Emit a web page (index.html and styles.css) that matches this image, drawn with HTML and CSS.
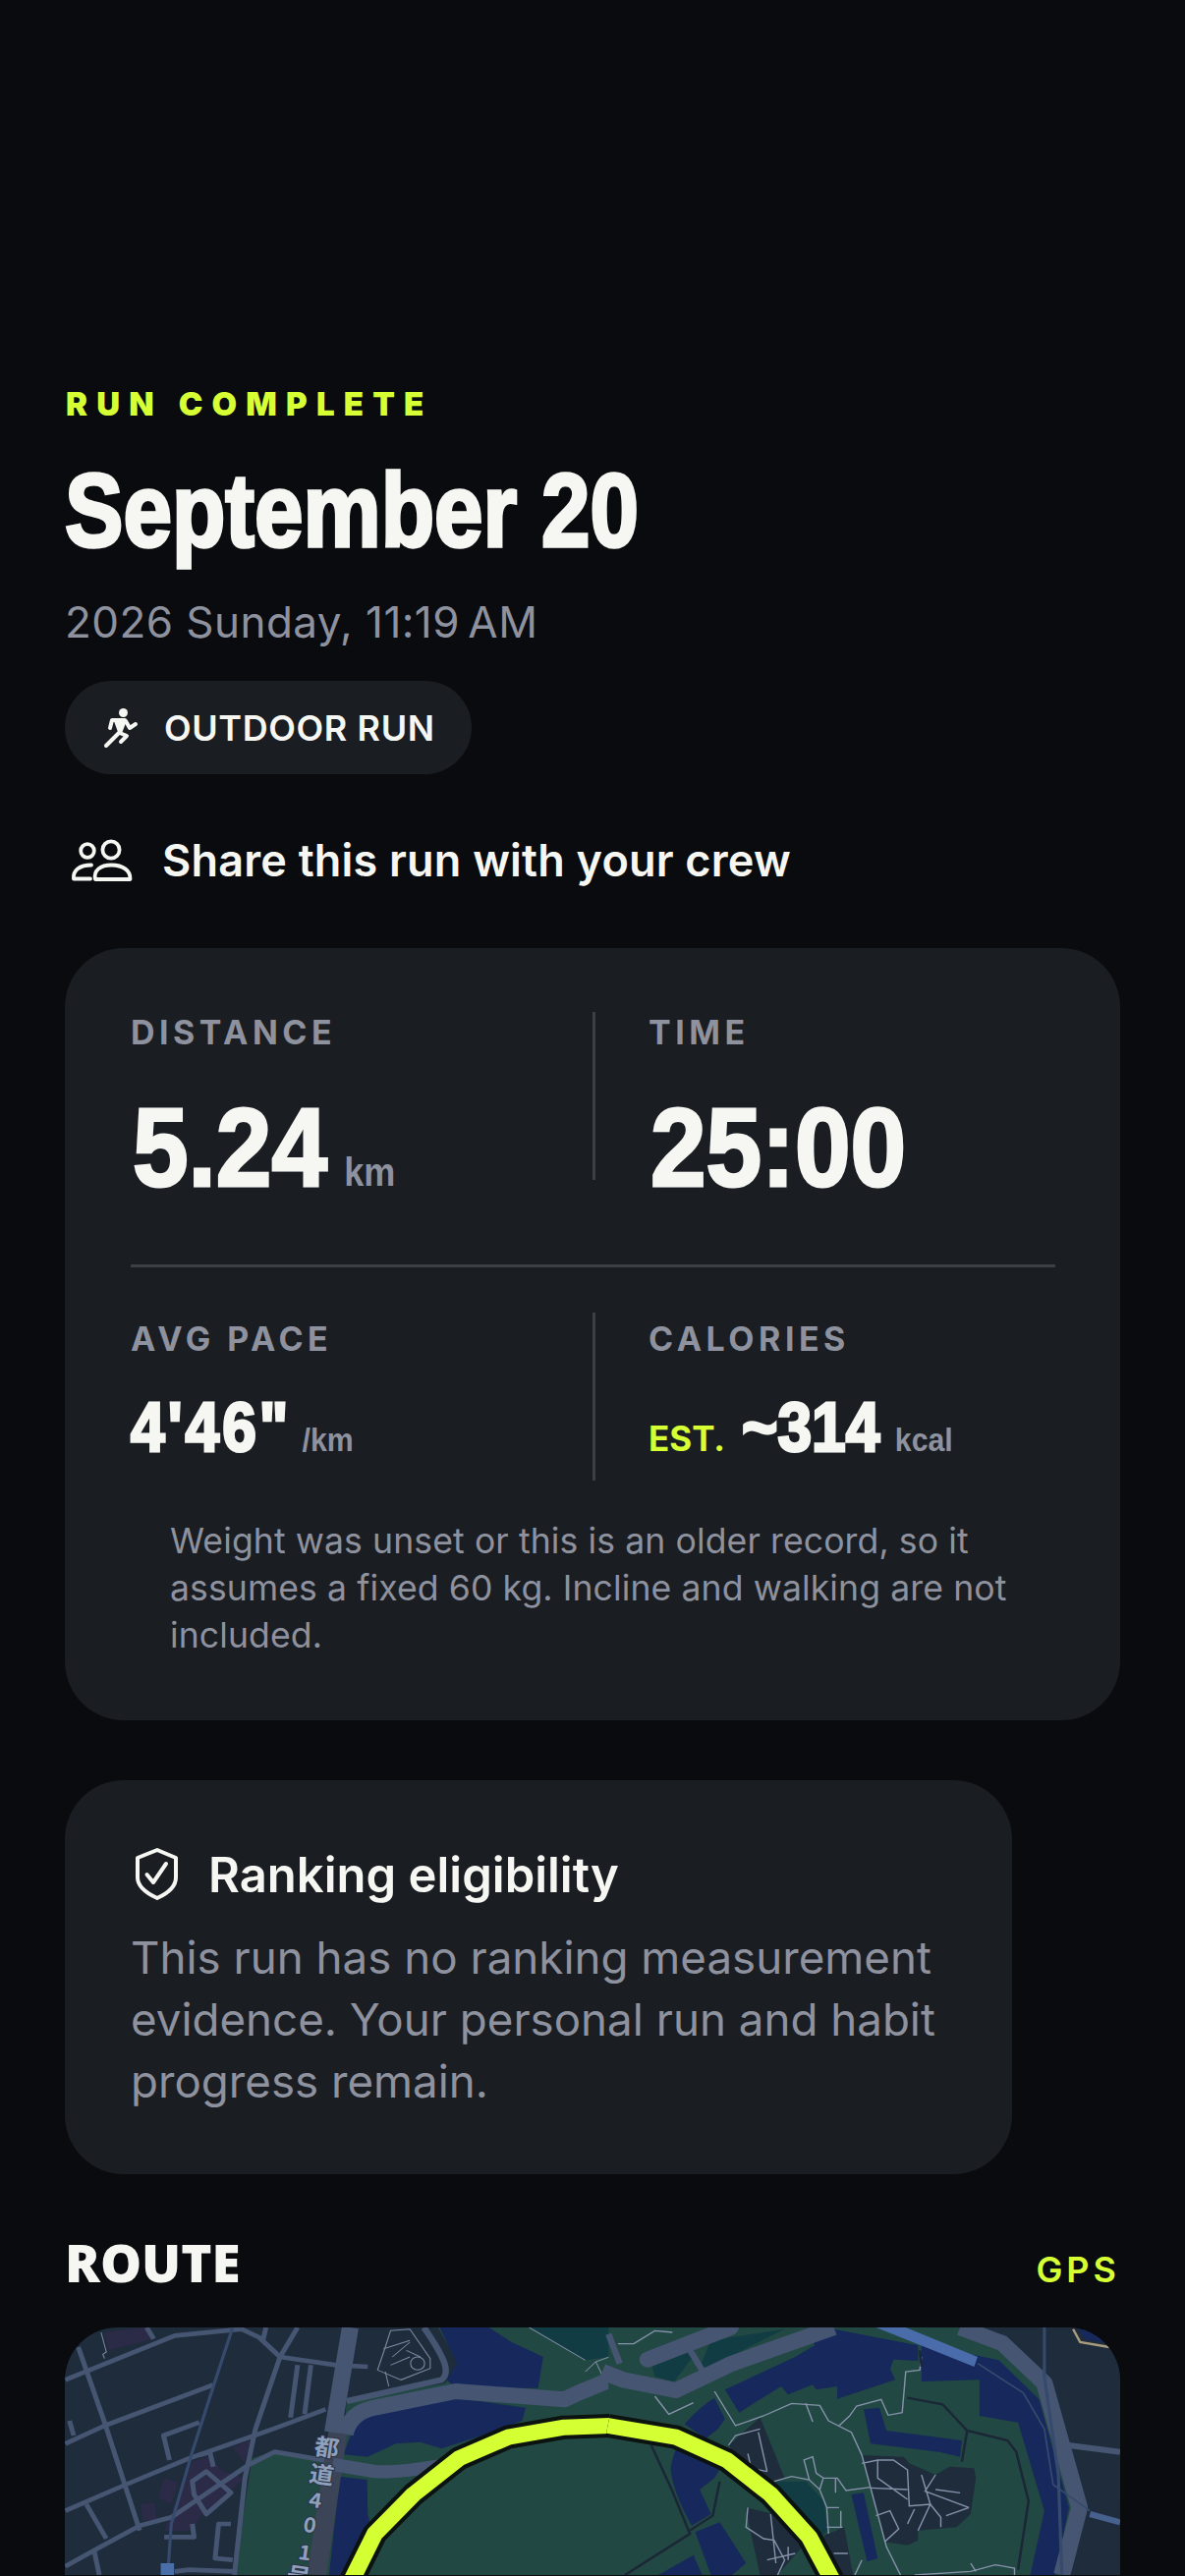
FILE: index.html
```html
<!doctype html>
<html lang="en">

<head>
  <meta charset="utf-8" />
  <meta name="viewport" content="width=device-width, initial-scale=1">
  <title>Run complete</title>
  <link rel="stylesheet" href="styles.css">
</head>

<body>
  <p class="eyebrow">RUN COMPLETE</p>
  <h1 class="run-title">September 20</h1>
  <p class="run-date">2026 Sunday, 11:19&#8201;AM</p>

  <div class="pill">
    <svg class="pill-icon" viewBox="0 0 60 60" fill="none" stroke="#f6f7f2" stroke-width="4" stroke-linecap="round" stroke-linejoin="round">
      <circle cx="30.5" cy="14.5" r="4.5" fill="#f6f7f2" stroke="none" />
      <path d="M17 30 L19 22 H32 L27 35 L34 38 L28 44" />
      <path d="M33 23 L37 30 L43 26" />
      <path d="M26 35 L20 41 L13 48" />
      <path d="M22 23 H31 L26 34 Z" fill="#f6f7f2" stroke-width="2" />
    </svg>
    <span>OUTDOOR RUN</span>
  </div>

  <div class="share">
    <svg class="share-icon" viewBox="0 0 80 60" fill="none" stroke="#f6f7f2" stroke-width="3.8" stroke-linecap="round" stroke-linejoin="round">
      <circle cx="23" cy="21" r="6.8" />
      <circle cx="47" cy="20" r="8.6" />
      <path d="M26 49.5 H9 C8 41 15 35.5 27 35.5" />
      <path d="M31 50 C29 41 36 35.5 47.500 35.500 C59 35.500 67 41 66.500 50 Z" />
    </svg>
    <span>Share this run with your crew</span>
  </div>

  <section class="card stats">
    <div class="stat-row">
      <div class="stat">
        <div class="stat-label">DISTANCE</div>
        <div class="stat-value big"><span class="squeeze">5.24<span class="unit"> km</span></span></div>
      </div>
      <div class="stat stat-right">
        <div class="stat-label">TIME</div>
        <div class="stat-value big"><span class="squeeze">25:00</span></div>
      </div>
    </div>
    <hr class="stat-line">
    <div class="stat-row">
      <div class="stat stat-low">
        <div class="stat-label">AVG PACE</div>
        <div class="stat-value small"><span class="squeeze"><span class="pace">4'46"</span><span class="unit unit-small"> /km</span></span></div>
      </div>
      <div class="stat stat-right stat-low">
        <div class="stat-label">CALORIES</div>
        <div class="stat-value small"><span class="est">EST.</span><span class="squeeze">~314<span class="unit unit-small"> kcal</span></span></div>
      </div>
    </div>
    <p class="stat-note">Weight was unset or this is an older record, so it assumes a fixed 60 kg. Incline and walking are not included.</p>
  </section>

  <section class="card ranking">
    <div class="ranking-head">
      <svg class="shield" viewBox="0 0 70 70" fill="none" stroke="#f6f7f2" stroke-width="4" stroke-linecap="round" stroke-linejoin="round">
        <path d="M35 10 L54 18 V38 C54 47 46 54 35 59 C24 54 15 47 15 38 V18 Z" />
        <path d="M24.500 35 L31 43 L44 24" />
      </svg>
      <h2>Ranking eligibility</h2>
    </div>
    <p class="ranking-text">This run has no ranking measurement evidence. Your personal run and habit progress remain.</p>
  </section>

  <div class="route-head">
    <h2>ROUTE</h2>
    <span class="gps">GPS</span>
  </div>

  <div class="map">
    <svg viewBox="0 0 1074 252" width="1074" height="252">
      <rect width="1074" height="252" fill="#1f2c3c" />

      <!-- left half, drawn in crop units -->
      <g transform="translate(-6 -110) scale(.35714 .33333)">
        <path class="park" d="M1080 330 L1140 440 L1100 500 L820 555 L805 740 L620 705 L550 730 L500 1086 H1570 V330 Z" />
        <path class="water" d="M1085 330 H1225 L1290 375 L1380 420 L1365 515 L1130 515 L1105 490 L1135 440 Z" />
        <path class="water" d="M850 610 L1130 545 L1330 575 L1320 615 L1190 665 L1090 700 L1030 680 L960 685 L880 725 L810 718 Z" />
        <path class="water" d="M800 785 L878 795 L880 900 L890 945 L810 1086 H770 Z" />
        <path class="teal" d="M1340 330 L1500 430 L1568 420 V330 Z" />

        <g class="purple">
          <path d="M300 790 L340 805 L320 870 L282 850 Z" />
          <path d="M232 870 L272 865 L278 915 L240 920 Z" />
          <path d="M380 740 L425 725 L470 770 L530 790 L400 910 L380 950 L300 950 L345 830 Z" />
          <path d="M495 695 L545 675 L530 745 Z" />
          <path d="M130 345 L250 330 L270 365 L140 400 Z" />
        </g>

        <g class="road">
          <path d="M18 490 L330 355 L520 335 L570 360 L630 420 L790 445 L880 450" />
          <path d="M55 390 L130 620 L230 950" />
          <path d="M18 685 L130 630 L440 505" />
          <path d="M18 890 L190 810 L370 730 L610 640 L760 580" />
          <path d="M680 330 L630 420 L560 640 L530 790 L500 1086" />
          <path d="M18 1060 L110 1005 L230 935 L320 910 L540 750 L615 710 L780 740" />
          <path d="M78 870 L135 975" />
          <path d="M400 620 L298 660 L315 735" />
          <path d="M680 445 L660 605" />
          <path d="M718 445 L700 595" />
          <path d="M30 615 L42 660" />
          <path d="M250 330 L270 365" />
          <path d="M590 330 L580 375" />
          <path d="M100 1010 L115 1086" />
          <path d="M380 930 L385 970 L300 970" />
          <path d="M490 930 H455 L445 1035 L495 1040" />
          <path d="M330 1075 L370 1070 L500 1075" />
          <path d="M380 800 L420 770 L490 835 L420 900 L385 840 Z" />
          <path d="M400 720 L430 710 L440 755" />
          <path class="road-mid" d="M820 555 L1090 490 C1115 470 1105 430 1040 330" />
          <path class="road-blue" d="M495 330 L440 510 L380 710 L320 930 L310 1086" />
          <path class="road-big road-dim" d="M795 650 L735 1086" />
          <path class="road-big" d="M830 330 L780 650" />
          <path class="road-big" d="M815 655 C830 590 880 580 900 575 L1130 525 L1440 550 L1480 530 L1570 490" />
          <path class="road-wide" d="M780 748 L900 770 Q960 775 1100 750" />
        </g>

        <g class="thin">
          <path d="M120 345 L135 405 L125 412 L130 425" />
          <path d="M945 340 L1000 335 L1058 425 L1058 455 L975 490 L908 460 L930 390 Z" />
          <path d="M925 395 L1000 370 M950 420 L1000 375 M990 400 L1030 420 M945 445 L1000 420" />
          <circle cx="1022" cy="440" r="20" />
          <path d="M930 465 L940 510 M1340 330 L1500 430 M1500 465 L1530 435 L1568 420 M1530 435 L1550 480" />
        </g>

        <rect x="290" y="1050" width="38" height="36" fill="#4a6fa8" />

        <g class="kanji">
          <text transform="translate(760 722) rotate(8)">都</text>
          <text transform="translate(745 805) rotate(8)">道</text>
          <text class="num" transform="translate(728 880) rotate(8)">4</text>
          <text class="num" transform="translate(712 955) rotate(8)">0</text>
          <text class="num" transform="translate(698 1040) rotate(8)">1</text>
          <text transform="translate(680 1115) rotate(8)">号</text>
        </g>
      </g>

      <!-- right half, same units -->
      <g transform="translate(554 -110) scale(.35714 .33333)">
        <path class="park" d="M-2 330 H1010 L1120 375 L1240 500 L1340 880 L1290 1086 H-2 Z" />
        <path class="teal" d="M120 440 L250 380 L235 425 L185 495 L130 480 Z" />
        <path class="teal" d="M290 370 L500 335 L250 470 Z" />
        <path class="teal" d="M470 800 L560 800 L612 860 L622 950 L560 1010 L470 900 Z" />
        <path class="land" d="M1000 330 H1456 V1086 H1290 L1340 880 L1240 500 L1120 375 Z" />

        <path class="water" d="M330 520 L530 420 L585 385 L800 455 L815 490 L650 548 L650 510 L590 520 L580 505 L510 535 L490 510 L370 590 Z" />
        <path class="water" d="M580 365 L640 335 L880 385 L880 432 L810 428 L800 458 L585 385 Z" />
        <path class="water" d="M890 380 L1110 430 L1225 550 L1310 880 L1270 1086 H1200 L1240 890 L1165 620 L1055 600 V490 L890 495 Z" />
        <path class="water" d="M215 625 Q260 570 300 545 L330 610 L310 640 L275 670 Z" />
        <path class="water" d="M175 760 Q180 720 200 680 L340 720 L300 790 L258 825 L290 900 L235 935 Q180 830 175 760 Z" />
        <path class="water" d="M245 955 L315 925 L390 1050 L350 1086 H290 Z" />
        <path class="water" d="M140 1086 L240 1025 L265 1086 Z" />
        <path class="water" d="M725 580 L770 575 L790 645 L1005 675 L1000 725 L940 710 L745 685 Z" />
        <path class="water" d="M690 840 L725 835 L765 1035 L735 1045 Z" />
        <path class="water" d="M955 835 L1000 835 L1010 870 L975 890 L955 870 Z" />
        <path class="water" d="M960 815 L1000 800 L1010 815 L990 825 Z" />

        <g class="garden">
          <path d="M720 720 L840 725 L855 745 L930 780 L970 755 L1040 760 L1045 790 L1030 900 L990 940 L880 950 L880 980 L850 995 L785 985 Z" />
          <path d="M340 690 L430 605 L500 790 L470 800 L400 780 Z" />
          <path d="M390 880 L470 900 L550 1000 L480 1086 H430 L400 940 Z" />
          <path d="M612 965 L670 940 L695 1086 H625 Z" />
        </g>

        <g class="thin thin-bright">
          <path d="M300 525 L360 630 L440 600 L520 562 L600 568 L625 615 L690 650 L720 720 L790 1000 L830 1086" />
          <path d="M560 562 L580 618 M655 630 L685 600 L705 570 L775 550 L795 598 L835 590 L845 465 L885 460 L890 420" />
          <path d="M720 745 L765 735 L810 735 L850 765 L855 875 L915 870 L945 910 L945 940" />
          <path d="M765 735 L765 790 L850 855 M745 820 L850 825 M760 905 L800 890 L825 945 L785 985" />
          <path d="M890 780 L915 870 L880 950 M930 780 L900 830 L1025 880 M930 825 L1000 835" />
          <path d="M960 905 L1025 880 M850 930 L870 885" />
          <path d="M340 690 L360 660 L430 640 M395 715 L405 760 L450 770 M425 650 L450 770" />
          <path d="M470 800 L520 785 L570 795 L600 825 L620 880 L625 960 M570 795 L555 735 L580 725 L590 775 L610 790 L600 825 M610 790 L650 790 L675 828 L745 818" />
          <path d="M620 880 H655 M620 940 L665 940 M640 1020 L680 1020 M660 890 V940 M645 790 V835" />
          <path d="M395 880 L390 940 L440 975 L470 980 L500 1040 L480 1086 M460 900 L475 1050 M510 1000 L510 1040 M450 1040 L530 1020" />
          <path d="M130 540 L170 595 L240 560 M25 380 L70 380 L130 340 L180 345" />
          <path d="M700 1086 L720 1040 M870 1086 L1030 1075 L1100 1055 L1155 1065 V1086 M1030 1050 L1045 1075" />
        </g>

        <g class="path-dark">
          <path d="M850 545 L950 565 L1020 645 L1135 675 L1160 710 L1195 860 L1165 1070" />
          <path d="M1020 645 L1005 740" />
          <path d="M120 690 L180 830 L230 960 L45 1086" />
          <path d="M230 950 L295 905 L315 800" />
          <path d="M885 400 L890 450" />
        </g>

        <g class="road">
          <path class="road-big" d="M1000 330 L1120 378 L1240 500 L1340 880 L1290 1086" />
          <path class="road-mid" d="M1310 690 L1456 710" />
          <path class="road-mid road-bluish" d="M1370 900 L1456 925" />
          <path class="road-blue" d="M1240 330 V480 L1280 780 L1290 1086" />
          <path class="road-blue road-fine" d="M1050 440 L1180 530 L1240 640 L1265 810 L1370 890" />
          <path class="road-big" d="M-20 465 L40 490 L190 522 L350 440 L640 330" />
          <path class="road-big road-cap" d="M110 428 L345 330" />
          <path class="road-mid" d="M225 390 L270 470" />
          <path class="road-mid" d="M-2 350 L30 440" />
        </g>

        <path d="M760 330 H845 L1050 420 L1040 450 Z" fill="#4a6cab" />
        <path d="M1335 330 L1355 365 L1430 380 V330 Z" fill="#16285c" />
        <path d="M1322 335 L1342 375 L1425 390" fill="none" stroke="#a79b7d" stroke-width="7" />
      </g>

      <g class="route-line">
        <g transform="translate(-6 -110) scale(.35714 .33333)">
          <path class="route-edge" d="M835 1100 L900 960 L1010 840 L1140 730 L1280 665 L1440 635 L1570 630" />
          <path class="route-core" d="M835 1100 L900 960 L1010 840 L1140 730 L1280 665 L1440 635 L1570 630" />
        </g>
        <g transform="translate(554 -110) scale(.35714 .33333)">
          <path class="route-edge" d="M-4 630 L190 665 L335 735 L460 840 L570 970 L635 1100" />
          <path class="route-core" d="M-4 630 L190 665 L335 735 L460 840 L570 970 L635 1100" />
        </g>
      </g>
    </svg>
  </div>
</body>

</html>
```

FILE: styles.css
```css
html,
body {
  height: 100%;
  margin: 0;
}

body {
  height: 2622px;
  overflow: hidden;
  box-sizing: border-box;
  padding: 391px 66px 0;
  background-color: #090b0f;
  color: #f6f7f2;
  font-family: Inter, "Liberation Sans", sans-serif;
}

p,
h1,
h2 {
  margin: 0;
}

.eyebrow {
  padding-left: 1px;
  color: #d6ff34;
  font-size: 33px;
  font-weight: 900;
  line-height: 40px;
  letter-spacing: 9.2px;
}

/* no condensed face is installed, so the heavy numerals get squeezed */
.run-title {
  margin-top: 38px;
  font-family: "Liberation Sans", sans-serif;
  font-size: 106px;
  font-weight: 700;
  line-height: 100px;
  white-space: nowrap;
  -webkit-text-stroke: 3.5px #f6f7f2;
  transform: scaleX(.84);
  transform-origin: left center;
}

.run-date {
  margin-top: 39px;
  color: #8e919e;
  font-size: 44px;
  line-height: 50px;
  letter-spacing: .45px;
}

.pill {
  display: flex;
  align-items: center;
  width: 414px;
  height: 95px;
  box-sizing: border-box;
  margin-top: 35px;
  padding-left: 29px;
  border-radius: 48px;
  background-color: #1a1d22;
  font-size: 36px;
  font-weight: 600;
  letter-spacing: .6px;
}

.pill-icon {
  width: 60px;
  height: 60px;
  margin-right: 12px;
}

.share {
  display: flex;
  align-items: center;
  height: 60px;
  margin-top: 57px;
  font-size: 45px;
  font-weight: 600;
  letter-spacing: .2px;
}

.share-icon {
  width: 80px;
  height: 60px;
  margin-right: 19px;
}

.card {
  background-color: #1a1d22;
  border-radius: 60px;
}

.stats {
  margin-top: 60px;
  padding: 65px 66px 62px 67px;
}

.stat-row {
  display: grid;
  grid-template-columns: 470px 1fr;
  grid-template-rows: 171px;
}

.stat-right {
  border-left: 3px solid #3b3f46;
  padding-left: 54px;
}

.stat-label {
  margin-top: 1px;
  color: #8e919e;
  font-size: 34px;
  font-weight: 700;
  line-height: 40px;
  letter-spacing: 4.5px;
}

.stat-low .stat-label {
  margin-top: 7px;
}

.stat-value {
  display: flex;
  align-items: baseline;
  font-family: "Liberation Sans", sans-serif;
  font-weight: 700;
  -webkit-text-stroke: 3px #f6f7f2;
  white-space: pre;
}

.squeeze {
  display: block;
  transform-origin: left center;
}

.big {
  margin-top: 47px;
  margin-left: 2px;
  font-size: 113px;
  line-height: 100px;
}

.big .squeeze {
  transform: scaleX(.9);
}

.small {
  margin-top: 35px;
  font-size: 70px;
  line-height: 70px;
}

.small .squeeze {
  transform: scaleX(.89);
}

.pace {
  margin-right: -5px;
  letter-spacing: 3.4px;
}

.unit {
  margin-left: 8px;
  color: #8e919e;
  font-size: 40px;
  letter-spacing: 0;
  -webkit-text-stroke: 0;
}

.unit-small {
  font-size: 34px;
}

.est {
  margin-right: 17px;
  color: #d6ff34;
  font-family: Inter, "Liberation Sans", sans-serif;
  font-size: 35px;
  font-weight: 700;
  -webkit-text-stroke: 0;
}

.stat-line {
  height: 3px;
  margin: 86px 0 46px;
  border: none;
  background-color: #3b3f46;
}

.stat-note {
  margin-top: 38px;
  padding-left: 40px;
  max-width: 860px;
  color: #8e919e;
  font-size: 35.6px;
  line-height: 48px;
  letter-spacing: .1px;
}

.ranking {
  width: 964px;
  box-sizing: border-box;
  margin-top: 61px;
  padding: 65px 60px 63px 67px;
}

.ranking-head {
  display: flex;
  align-items: center;
  height: 62px;
}

.shield {
  width: 70px;
  height: 70px;
  margin: 0 17px 0 -8px;
}

.ranking-head h2 {
  font-size: 49px;
  font-weight: 600;
}

.ranking-text {
  margin-top: 22px;
  color: #8e919e;
  font-size: 45.7px;
  line-height: 63px;
}

.route-head {
  display: flex;
  justify-content: space-between;
  align-items: baseline;
  height: 60px;
  margin-top: 60px;
  line-height: 60px;
}

.route-head h2 {
  font-family: "Noto Sans", Inter, sans-serif;
  font-size: 53px;
  font-weight: 900;
}

.gps {
  color: #d6ff34;
  font-size: 36px;
  font-weight: 600;
  letter-spacing: 4px;
}

.map {
  margin-top: 36px;
  height: 252px;
  overflow: hidden;
  border-radius: 54px 54px 0 0;
}

.map svg {
  display: block;
}

.park {
  fill: #224843;
}

.water {
  fill: #16285c;
}

.teal {
  fill: #123c44;
}

.land {
  fill: #1f2c3c;
}

.purple {
  fill: #2b2b48;
}

.road {
  fill: none;
  stroke: #465672;
  stroke-width: 14;
  stroke-linejoin: round;
}

.road-mid {
  stroke-width: 18;
}

.road-bluish {
  stroke: #47618f;
}

.road-blue {
  stroke: #354a6c;
  stroke-width: 9;
}

.road-fine {
  stroke-width: 5;
}

.road-big {
  stroke-width: 48;
}

.road-dim {
  stroke: #3b4557;
  stroke-width: 54;
}

.road-wide {
  stroke-width: 40;
}

.road-cap {
  stroke-linecap: round;
}

.thin {
  fill: none;
  stroke: #7d8aa3;
  stroke-width: 3;
}

.thin-bright {
  stroke: #8592aa;
  stroke-width: 4;
}

.garden {
  fill: #1f2c3c;
}

.path-dark {
  fill: none;
  stroke: #1b2636;
  stroke-width: 7;
}

.kanji text {
  fill: #8fa0bd;
  stroke: #2b3547;
  stroke-width: 6;
  paint-order: stroke;
  font-family: "Noto Sans CJK JP", sans-serif;
  font-size: 70px;
  font-weight: 700;
  text-anchor: middle;
}

.kanji .num {
  font-size: 62px;
}

.route-edge,
.route-core {
  fill: none;
  stroke-linejoin: round;
}

.route-edge {
  stroke: #0b1210;
  stroke-width: 72;
}

.route-core {
  stroke: #d4ff33;
  stroke-width: 48;
}
```
